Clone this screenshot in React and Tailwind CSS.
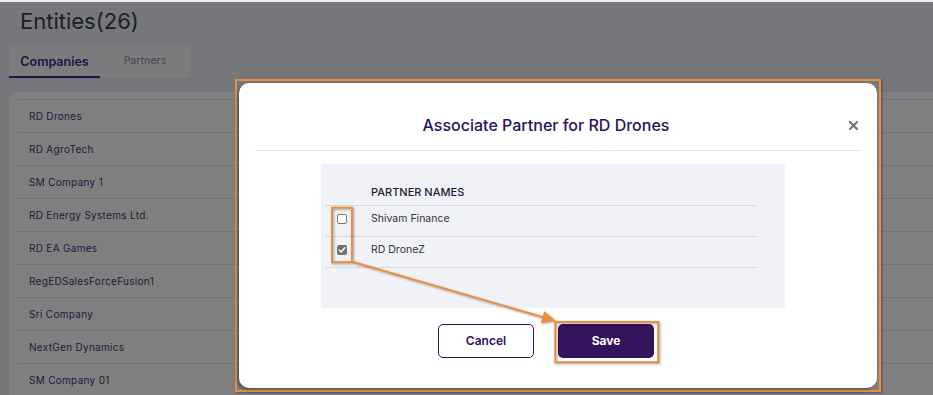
import React from 'react';

const companies = [
  "RD Drones",
  "RD AgroTech",
  "SM Company 1",
  "RD Energy Systems Ltd.",
  "RD EA Games",
  "RegEDSalesForceFusion1",
  "Sri Company",
  "NextGen Dynamics",
  "SM Company 01",
];

const partners = [
  { name: "Shivam Finance", checked: false },
  { name: "RD DroneZ", checked: true },
];

const CheckBox = ({ checked }) => {
  if (checked) {
    return (
      <span className='flex h-[10px] w-[10px] items-center justify-center rounded-[2px] bg-[#737373]'>
        <svg width="8" height="8" viewBox="0 0 8 8">
          <path d="M1.3 4.2 L3.2 6 L6.8 1.8" fill="none" stroke="#fff" strokeWidth="1.5" strokeLinecap="round" strokeLinejoin="round" />
        </svg>
      </span>
    )
  }
  return <span className='block h-[10px] w-[10px] rounded-[2px] border border-[#767676] bg-white'></span>
}

const App = () => {
  return (
    <div className='relative h-[395px] w-[933px] overflow-hidden bg-[#eceef6] font-["Inter",sans-serif]'>
      {/* page under the dialog */}
      <div className='pl-[20px] pt-[7px] text-[22px] leading-[28px] text-[#3c3f4a]'>Entities(26)</div>
      <div className='ml-[9px] mt-[10px] flex h-[34px] w-[181px] border-b border-[#e2e3ea]'>
        <div className='flex w-[91px] items-center justify-center rounded-t-[6px] border-b-2 border-[#3b2a86] bg-[#f8f9fd] pt-[3px] text-[12.5px] font-semibold text-[#3b2a86]'>
          Companies
        </div>
        <div className='flex w-[90px] items-center justify-center rounded-t-[6px] bg-[#f8f9fd] pb-[2px] text-[10.5px] font-medium text-[#9a9cab]'>
          Partners
        </div>
      </div>
      <div className='ml-[9px] mt-[13px] rounded-tl-[8px] bg-white pl-[8px] pt-[7px]'>
        {companies.map((item, index) => (
          <div key={index} className='flex h-[33px] items-center border-t border-[#e4e4e4] pl-[12px] text-[10px] tracking-[0.3px] text-[#45376f]'>
            {item}
          </div>
        ))}
      </div>

      {/* backdrop + dialog */}
      <div className='absolute inset-x-0 bottom-0 top-[2px] bg-black/50 pl-[235px] pt-[77px]'>
        <div className='w-[646px] border-2 border-[#e8913a] p-[2px] shadow-[1px_1px_2px_rgba(0,0,0,0.35)]'>
          <div className='w-[638px] rounded-[10px] bg-white px-4 shadow-[-2px_2px_3px_rgba(0,0,0,0.3)]'>
            <div className='flex items-center border-b border-[#e2e3e8] pb-[13px] pt-[30px]'>
              <div className='flex-1 text-center text-base font-medium leading-6 text-[#2c1160]'>Associate Partner for RD Drones</div>
              <button className='flex w-6 justify-end pr-[3px] text-[#6f6f6f]'>
                <svg width="9" height="9" viewBox="0 0 9 9">
                  <path d="M1 1 L8 8 M8 1 L1 8" stroke="currentColor" strokeWidth="2" strokeLinecap="round" />
                </svg>
              </button>
            </div>
            <div className='ml-[66px] mt-[13px] w-[464px] bg-[#f1f2f7] pb-[40px] pl-[4px] pr-[28px] pt-[16px]'>
              <div className='flex h-[26px] items-center border-b border-[#d9dae0]'>
                <div className='w-[34px]'></div>
                <div className='pl-3 text-[11px] font-medium uppercase text-[#1c1b3a]'>Partner Names</div>
              </div>
              {partners.map((p, index) => (
                <div key={index} className='flex h-[31px] items-center border-b border-[#d9dae0] pb-[5px]'>
                  <div className='flex w-[34px] justify-center'>
                    <CheckBox checked={p.checked} />
                  </div>
                  <div className='pl-3 text-[10.5px] text-[#333338]'>{p.name}</div>
                </div>
              ))}
            </div>
            <div className='mt-4 flex justify-center gap-6 pb-[30px] pr-6'>
              <button className='h-[34px] w-[96px] rounded-[5px] border border-[#2e1065] bg-white text-[12px] font-semibold text-[#2e1065]'>Cancel</button>
              <button className='h-[34px] w-[96px] rounded-[5px] bg-[#33135c] text-[12px] font-bold text-white'>Save</button>
            </div>
          </div>
        </div>
      </div>

      {/* annotation marks */}
      <svg className='pointer-events-none absolute left-0 top-0 drop-shadow-[1px_1px_1px_rgba(0,0,0,0.35)]' width="933" height="395" viewBox="0 0 933 395">
        <rect x="332" y="207.7" width="20" height="54.5" fill="none" stroke="#e8913a" strokeWidth="2" />
        <rect x="555.3" y="322" width="103" height="40.3" fill="none" stroke="#e8913a" strokeWidth="2" />
        <line x1="353" y1="262" x2="544" y2="317.5" stroke="#e8913a" strokeWidth="2" />
        <polygon points="556,321 540.8,322.9 544.2,311.3" fill="#e8913a" />
      </svg>
    </div>
  )
}

export default App
